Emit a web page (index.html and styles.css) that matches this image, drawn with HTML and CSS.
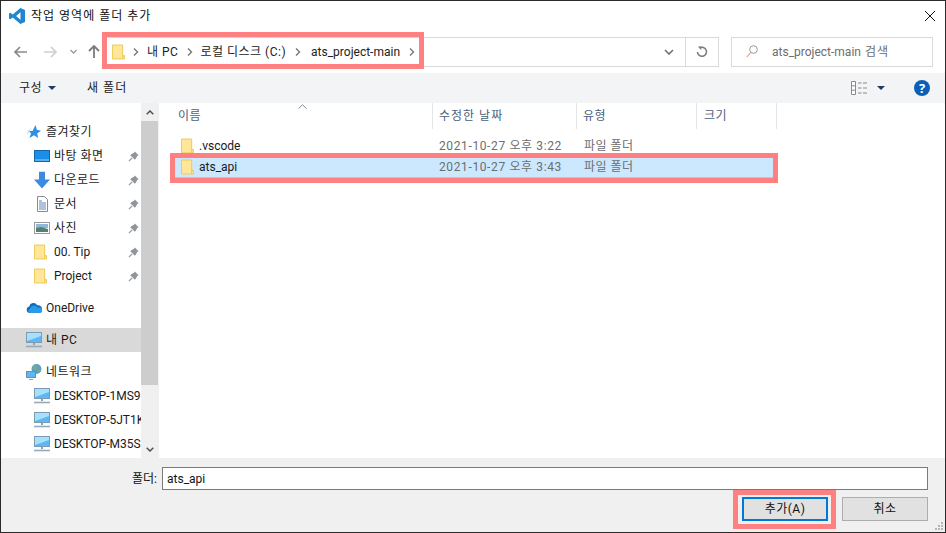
FILE: index.html
```html
<!DOCTYPE html>
<html lang="ko">
<head>
<meta charset="utf-8">
<title>작업 영역에 폴더 추가</title>
<link rel="stylesheet" href="styles.css">
</head>
<body>
<svg class="defs" width="0" height="0">
  <symbol id="folder" viewBox="0 0 14 16">
    <path d="M.5.5h11v11.5h2v3.5H.5z" fill="#ffe699" stroke="#ecc850"/>
    <path d="M11.5 15.5v-3.5h2" fill="#ffe699" stroke="#ecc850"/>
  </symbol>
  <symbol id="chev" viewBox="0 0 6 8"><path d="M1 .5 4.5 4 1 7.5" fill="none" stroke="#777" stroke-width="1.4"/></symbol>
  <symbol id="pin" viewBox="0 0 12 12">
    <path d="M7.5.5 11.5 4.5 10 5.5 8.5 8.5 7.5 9.5 2.5 4.5 3.5 3.5 6.5 2z" fill="#8f959b"/>
    <path d="M4.5 7.5 1 11" stroke="#8f959b" stroke-width="1.3"/>
  </symbol>
  <symbol id="pc" viewBox="0 0 16 16">
    <rect x=".5" y=".5" width="15" height="10" fill="#5cb8f4" stroke="#7d9bb3"/>
    <path d="M1 1h14v3L1 9z" fill="#a6e0fb"/>
    <path d="M7 11h2v2H7z" fill="#8aa3b8"/><path d="M0 14.5h16" stroke="#98a9b8" stroke-width="1.6"/>
  </symbol>
</svg>
<div class="window">
  <header class="titlebar">
    <svg class="vs" width="16" height="16" viewBox="0 0 16 16"><path d="M11.4 0 16 2v12l-4.6 2L3.8 9.4 1.3 11.3 0 10.6V5.400l1.300-.7 2.500 1.900zM11.500 4.300 7 8l4.500 3.700z" fill="#1f86cf"/></svg>
    <span class="title">작업 영역에 폴더 추가</span>
    <svg class="close" width="10" height="10" viewBox="0 0 10 10"><path d="M0 0 10 10M10 0 0 10" stroke="#111" stroke-width="1"/></svg>
  </header>

  <nav class="navbar">
    <svg class="nav-back" width="13" height="12" viewBox="0 0 13 12"><path d="M6 1 1 6l5 5M1 6h12" fill="none" stroke="#8a8a8a" stroke-width="1.700"/></svg>
    <svg class="nav-fwd" width="13" height="12" viewBox="0 0 13 12"><path d="M7 1l5 5-5 5M12 6H0" fill="none" stroke="#d0d0d0" stroke-width="1.700"/></svg>
    <svg class="nav-down" width="7" height="5" viewBox="0 0 7 5"><path d="M.5 1 3.500 4 6.500 1" fill="none" stroke="#9a9a9a" stroke-width="1.300"/></svg>
    <svg class="nav-up" width="12" height="13" viewBox="0 0 12 13"><path d="M1 6l5-5 5 5M6 1v12" fill="none" stroke="#7b7b7b" stroke-width="1.800"/></svg>
    <div class="address">
      <svg class="addr-folder" width="13" height="16"><use href="#folder"/></svg>
      <svg class="crumb-chev" width="6" height="8"><use href="#chev"/></svg>
      <span class="crumb crumb-pc ko">내 PC</span>
      <svg class="crumb-chev" width="6" height="8"><use href="#chev"/></svg>
      <span class="crumb crumb-disk ko">로컬 디스크 (C:)</span>
      <svg class="crumb-chev" width="6" height="8"><use href="#chev"/></svg>
      <span class="crumb crumb-dir">ats_project-main</span>
      <svg class="crumb-chev" width="6" height="8"><use href="#chev"/></svg>
      <span class="addr-fill"></span>
      <span class="addr-btn"><svg width="10" height="6" viewBox="0 0 10 6"><path d="M1 1l4 4 4-4" fill="none" stroke="#707070" stroke-width="1.600"/></svg></span>
      <span class="addr-btn addr-refresh"><svg width="12" height="12" viewBox="0 0 12 12"><path d="M3.500 2.100A4.500 4.500 0 1 1 1.500 6" fill="none" stroke="#7a7a7a" stroke-width="1.500"/><path d="M1.800 0.500h3.500v3.500z" fill="#7a7a7a"/></svg></span>
    </div>
    <div class="search">
      <svg width="12" height="13" viewBox="0 0 12 13"><circle cx="7.500" cy="4.500" r="3.800" fill="none" stroke="#9a9a9a"/><path d="M4.800 7.300 .8 12" stroke="#c98a7a"/></svg>
      <span class="search-text">ats_project-main <span class="search-ko">검색</span></span>
    </div>
  </nav>

  <div class="toolbar">
    <span class="tool ko">구성</span><span class="tri tri-org"></span>
    <span class="tool tool-new ko">새 폴더</span>
    <span class="spacer"></span>
    <svg class="view" width="16" height="14" viewBox="0 0 16 14"><path d="M.500.500h4v13h-4zM.500 4.800h4M.500 9.200h4" fill="#fff" stroke="#8a8a8a"/><path d="M7 2h3.500M12 2h4M7 7h3.500M12 7h4M7 12h3.500M12 12h4" stroke="#8a8a8a"/></svg>
    <span class="tri tri-view"></span>
    <svg class="help" width="16" height="16" viewBox="0 0 16 16"><circle cx="8" cy="8" r="8" fill="#0b5fb5"/></svg>
    <span class="help-mark">?</span>
  </div>

  <main class="content">
    <aside class="sidebar">
      <ul class="tree">
        <li class="row top"><svg width="15" height="14" viewBox="0 0 15 14"><path d="M0 9.500 4 6.500 0 5.500H4L5 3z" fill="#9fd3f5"/><path d="M9.500 0 10.800 4.700 15 5.700 11.300 8.300 12 13 8 10.300 3.500 13 5 8.500 3 6H6.500z" fill="#2f8fe3"/></svg><span class="ko">즐겨찾기</span></li>
        <li class="row sub"><svg width="16" height="12" viewBox="0 0 16 12"><rect x=".5" y=".5" width="15" height="11" fill="#1b8fe6" stroke="#1268ad"/><path d="M1 10h14" stroke="#8fd0f8"/></svg><span class="ko">바탕 화면</span><svg class="pin" width="11" height="11"><use href="#pin"/></svg></li>
        <li class="row sub"><svg width="16" height="17" viewBox="0 0 16 17"><path d="M5 0h6v8h5L8 17 0 8h5z" fill="#3b8be0"/></svg><span class="ko">다운로드</span><svg class="pin" width="11" height="11"><use href="#pin"/></svg></li>
        <li class="row sub"><svg width="16" height="16" viewBox="0 0 16 16"><path d="M3.500.500h7l3 3v12h-10z" fill="#fff" stroke="#8b8b8b"/><path d="M5 5h3M5 7h7M5 9h7M5 11h7M5 13h7" stroke="#5d87b5"/></svg><span class="ko">문서</span><svg class="pin" width="11" height="11"><use href="#pin"/></svg></li>
        <li class="row sub"><svg width="16" height="12" viewBox="0 0 16 12"><rect x=".5" y=".5" width="15" height="11" fill="#fff" stroke="#9a9a9a"/><path d="M2 2h12v4H2z" fill="#8fb7d8"/><path d="M2 6l5-1 7 2v3H2z" fill="#53806f"/></svg><span class="ko">사진</span><svg class="pin" width="11" height="11"><use href="#pin"/></svg></li>
        <li class="row sub"><svg class="tree-folder" width="13" height="16"><use href="#folder"/></svg><span>00. Tip</span><svg class="pin" width="11" height="11"><use href="#pin"/></svg></li>
        <li class="row sub"><svg class="tree-folder" width="13" height="16"><use href="#folder"/></svg><span>Project</span><svg class="pin" width="11" height="11"><use href="#pin"/></svg></li>
        <li class="row top group"><svg width="16" height="11" viewBox="0 0 16 11"><path d="M3.800 10.500a3.300 3.300 0 0 1-.6-6.500 4.300 4.300 0 0 1 8-1.200 3.800 3.800 0 0 1 4.800 3.700 3.500 3.500 0 0 1-2 4z" fill="#0f6cbd"/><path d="M3.800 10.500a2.300 2.300 0 0 1 .2-4.300 4 4 0 0 1 7.500-1 3 3 0 0 1 4.500 3 2.800 2.800 0 0 1-2 2.300z" fill="#2a9be8"/></svg><span>OneDrive</span></li>
        <li class="row top group selected"><svg width="16" height="16"><use href="#pc"/></svg><span class="ko">내 PC</span></li>
        <li class="row top group"><svg width="16" height="16" viewBox="0 0 16 16"><circle cx="10.500" cy="5" r="5" fill="#5f9fc9"/><path d="M8 1l3 2-1 3-3-1zM12 6l3 0-2 3z" fill="#79b26c"/><rect x=".5" y="7.500" width="9" height="6" fill="#5cb8f4" stroke="#6f8ea6"/><path d="M3 15.500h4" stroke="#8aa3b8"/></svg><span class="ko">네트워크</span></li>
        <li class="row sub"><svg width="16" height="16"><use href="#pc"/></svg><span>DESKTOP-1MS9</span></li>
        <li class="row sub"><svg width="16" height="16"><use href="#pc"/></svg><span>DESKTOP-5JT1K</span></li>
        <li class="row sub"><svg width="16" height="16"><use href="#pc"/></svg><span>DESKTOP-M35S</span></li>
      </ul>
    </aside>
    <div class="scrollbar">
      <span class="sb-btn"><svg width="8" height="5" viewBox="0 0 8 5"><path d="M.7 4.300 4 1l3.300 3.300" fill="none" stroke="#505050" stroke-width="1.500"/></svg></span>
      <span class="sb-thumb"></span>
      <span class="sb-track"></span>
      <span class="sb-btn"><svg width="8" height="5" viewBox="0 0 8 5"><path d="M.7.7 4 4 7.300.7" fill="none" stroke="#505050" stroke-width="1.500"/></svg></span>
    </div>
    <section class="files">
      <svg class="sort" width="9" height="5" viewBox="0 0 9 5"><path d="M.5 4.500 4.500.8l4 3.700" fill="none" stroke="#8a8a8a"/></svg>
      <div class="cols header">
        <span class="col-name ko">이름</span>
        <span class="col-date ko">수정한 날짜</span>
        <span class="col-type ko">유형</span>
        <span class="col-size ko">크기</span>
      </div>
      <div class="cols file">
        <span class="col-name"><svg width="13" height="16"><use href="#folder"/></svg><b>.vscode</b></span>
        <span class="col-date">2021-10-27 오후 3:22</span>
        <span class="col-type ko">파일 폴더</span>
      </div>
      <div class="cols file active">
        <span class="col-name"><svg width="13" height="16"><use href="#folder"/></svg><b>ats_api</b></span>
        <span class="col-date">2021-10-27 오후 3:43</span>
        <span class="col-type ko">파일 폴더</span>
      </div>
    </section>
  </main>

  <footer class="bottom">
    <div class="name-row">
      <label class="name-label" for="fname">폴더:</label>
      <input id="fname" class="name-input" value="ats_api">
    </div>
    <div class="btn-row">
      <button class="btn primary ko">추가(A)</button>
      <button class="btn ko">취소</button>
    </div>
    <svg class="grip" width="8" height="8" viewBox="0 0 8 8"><path d="M6 0h2v2H6zM3 3h2v2H3zM6 3h2v2H6zM0 6h2v2H0zM3 6h2v2H3zM6 6h2v2H6z" fill="#b5b5b5"/></svg>
  </footer>

  <div class="mark mark-address"></div>
  <div class="mark mark-row"></div>
  <div class="mark mark-button"></div>
</div>
</body>
</html>
```
FILE: styles.css
```css
* { box-sizing: border-box; }
html, body { margin: 0; padding: 0; }
body {
  width: 946px; height: 533px; overflow: hidden; background: #fff;
  font: 12px/16px Roboto, "Noto Sans CJK KR", sans-serif; color: #1a1a1a;
}
.ko { letter-spacing: .5px; }
.defs { position: absolute; }
svg { display: block; flex: none; }
.window {
  position: relative; width: 946px; height: 533px;
  border: 1px solid #2a2a2a;
  display: flex; flex-direction: column; overflow: hidden;
}
.titlebar { height: 29px; flex: none; display: flex; align-items: center; padding: 0 10px 0 8px; }
.title { margin-left: 6px; letter-spacing: 1px; color: #111; }
.close { margin-left: auto; }

.navbar { height: 43px; flex: none; display: flex; align-items: center; padding-left: 13px; position: relative; }
.nav-fwd { margin-left: 17px; }
.nav-down { margin-left: 13px; }
.nav-up { margin-left: 11px; }
.address {
  margin-left: 5px; width: 614px; height: 30px; border: 1px solid #d9d9d9;
  display: flex; align-items: center; padding-left: 6px;
}
.addr-folder { margin-right: 8px; }
.crumb { color: #222; white-space: nowrap; }
.crumb-pc { margin: 0 9px 0 8px; }
.crumb-disk { margin: 0 9px 0 7px; }
.crumb-dir { margin: 0 9px 0 10px; }
.addr-fill { flex: 1; }
.addr-btn { width: 33px; height: 100%; display: flex; align-items: center; justify-content: center; flex: none; }
.addr-refresh { border-left: 1px solid #d9d9d9; }
.search {
  margin-left: 12px; width: 202px; height: 30px; border: 1px solid #d9d9d9;
  display: flex; align-items: center; padding-left: 14px; color: #6d6d6d;
}
.search-text { margin-left: 14px; white-space: nowrap; }
.search-ko { letter-spacing: 1px; margin-left: 1px; }

.toolbar { height: 30px; flex: none; background: #f3f4f6; display: flex; align-items: center; padding-left: 18px; position: relative; }
.tool { color: #222; }
.tool-new { margin-left: 31px; letter-spacing: 1px; }
.tri { width: 0; height: 0; border: 4px solid transparent; border-top: 4px solid #1f3a63; border-bottom: 0; flex: none; }
.tri-org { margin-left: 6px; }
.spacer { flex: 1; }
.tri-view { margin-left: 10px; }
.help { margin-left: 29px; margin-right: 15px; }
.help-mark {
  position: absolute; right: 15px; width: 16px; text-align: center;
  color: #fff; font: 700 13px/16px "Open Sans", sans-serif;
}

.content { flex: 1; min-height: 0; display: flex; }
.sidebar { width: 140px; flex: none; overflow: hidden; padding-top: 17px; }
.tree { list-style: none; margin: 0; padding: 0; }
.row { height: 24px; display: flex; align-items: center; white-space: nowrap; position: relative; color: #1a1a1a; }
.row > svg:first-child { position: absolute; top: 50%; transform: translateY(-50%); }
.top { padding-left: 45px; }
.top > svg:first-child { left: 25px; }
.sub { padding-left: 53px; }
.sub > svg:first-child { left: 33px; }
.sub > .tree-folder { left: 34px; }
.group { margin-top: 8px; }
.selected { background: #d9d9d9; }
.pin { position: absolute; left: 127px; top: 7px; }
.scrollbar { width: 17px; flex: none; display: flex; flex-direction: column; background: #f0f0f0; }
.sb-btn { height: 18px; display: flex; align-items: center; justify-content: center; flex: none; }
.sb-thumb { height: 264px; background: #cdcdcd; flex: none; }
.sb-track { flex: 1; }
.files { flex: 1; position: relative; border-left: 1px solid #f0f0f0; min-width: 0; }
.sort { position: absolute; left: 139px; top: 1px; }
.cols { display: flex; align-items: center; }
.header { height: 26px; margin-bottom: 5px; color: #4c607a; }
.header span { height: 100%; display: flex; align-items: center; border-right: 1px solid #e5e5e5; padding-left: 6px; }
.header .col-date { letter-spacing: 1px; }
.col-name { width: 274px; padding-left: 19px !important; display: flex; align-items: center; }
.col-date { width: 144px; padding-left: 6px; }
.col-type { width: 120px; padding-left: 7px; }
.col-size { width: 80px; padding-left: 7px !important; }
.file { height: 22px; margin-left: 16px; width: 598px; color: #6d6d6d; padding-top: 1px; }
.file .col-name { width: 258px; padding-left: 6px !important; }
.file .col-name b { font-weight: 400; color: #1a1a1a; margin-left: 5px; }
.file .col-date { width: 144px; padding-left: 6px; letter-spacing: .62px; }
.file .col-type { padding-left: 7px; }
.active { background: #cce8ff; border-bottom: 1px solid #99d1ff; }

.bottom { height: 74px; flex: none; background: #f0f0f0; position: relative; padding: 9px 17px 0 0; display: flex; flex-direction: column; }
.name-row { display: flex; align-items: center; justify-content: flex-end; }
.name-label { margin-right: 5px; color: #111; }
.name-input {
  width: 766px; height: 23px; border: 1px solid #7a7a7a; background: #fff;
  font: inherit; color: #111; padding: 0 4px; outline: 0;
}
.btn-row { display: flex; justify-content: flex-end; gap: 14px; margin-top: 7px; }
.btn {
  width: 86px; height: 24px; padding: 0; border: 1px solid #adadad; background: #e1e1e1;
  font: inherit; color: #111;
}
.btn.ko { letter-spacing: .5px; }
.primary { border: 2px solid #0078d7; }
.grip { position: absolute; right: 2px; bottom: 2px; }

.mark { position: absolute; border: 5px solid #ff8080; pointer-events: none; }
.mark-address { left: 101px; top: 31px; width: 322px; height: 37px; }
.mark-row { left: 169px; top: 152px; width: 608px; height: 30px; }
.mark-button { left: 732px; top: 489px; width: 103px; height: 39px; }
```
